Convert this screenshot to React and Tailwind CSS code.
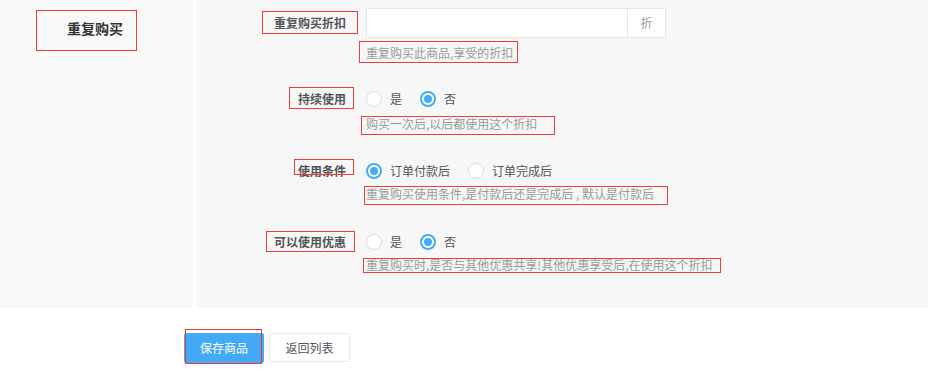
// App.jsx
const font = { fontFamily: '"Noto Sans CJK SC", "Noto Sans", sans-serif' };

function Radio({ checked }) {
  if (checked) {
    return (
      <span className="w-4 h-4 rounded-full border-2 border-[#44abf7] bg-white flex items-center justify-center">
        <span className="w-2 h-2 rounded-full bg-[#44abf7]" />
      </span>
    );
  }
  return <span className="w-4 h-4 rounded-full border border-[#dcdcdc] bg-white" />;
}

function Options({ items }) {
  return (
    <div className="flex items-center h-5">
      {items.map((it) => (
        <label key={it.text} className="flex items-center mr-[18px]">
          <Radio checked={it.checked} />
          <span className="ml-2 text-[12px] text-[#555]">{it.text}</span>
        </label>
      ))}
    </div>
  );
}

function Label({ children, box }) {
  return (
    <>
      <div className="w-[150px] shrink-0 text-right text-[12px] font-bold text-[#555]">{children}</div>
      <span className={"absolute border border-[#f23c3c] pointer-events-none " + box} />
    </>
  );
}

function Help({ children, className, box }) {
  return (
    <div className={"relative ml-[170px] h-[17px] leading-[17px] text-[12px] text-[#999] " + className}>
      {children}
      <span className={"absolute border border-[#f23c3c] pointer-events-none " + box} />
    </div>
  );
}

export default function App() {
  return (
    <div className="w-[928px] h-[375px] bg-white overflow-hidden" style={font}>
      <div className="flex h-[308px]">
        {/* left title */}
        <div className="relative w-[193px] shrink-0 bg-[#f8f8f8]">
          <div className="pl-[67px] pt-[19px] text-[14px] font-bold text-[#333] leading-[18px]">重复购买</div>
          <span className="absolute left-[36px] top-[10px] w-[101px] h-[41px] border border-[#f23c3c]" />
        </div>

        {/* right form */}
        <div className="ml-[3px] flex-1 bg-[#f7f7f7] pt-2">
          <div className="relative flex items-center h-[30px]">
            <Label box="left-[66px] top-[3px] w-[96px] h-[23px]">重复购买折扣</Label>
            <div className="ml-5 flex h-[30px] w-[300px] border border-[#e7e7e7] bg-white">
              <input className="flex-1 min-w-0 outline-none px-2 text-[12px]" />
              <span className="w-[38px] border-l border-[#e7e7e7] flex items-center justify-center text-[12px] text-[#999]">折</span>
            </div>
          </div>
          <Help className="mt-[6px]" box="-left-[7px] -top-[3px] w-[159px] h-[22px]">重复购买此商品,享受的折扣</Help>

          <div className="relative flex items-center h-5 mt-[28px]">
            <Label box="left-[93px] -top-[2px] w-[65px] h-[22px]">持续使用</Label>
            <div className="ml-5">
              <Options items={[{ text: "是" }, { text: "否", checked: true }]} />
            </div>
          </div>
          <Help className="mt-[6px]" box="-left-[5px] top-[1px] w-[194px] h-[19px]">购买一次后,以后都使用这个折扣</Help>

          <div className="relative flex items-center h-5 mt-[29px]">
            <Label box="left-[98px] -top-[2px] w-[60px] h-[16px]">使用条件</Label>
            <div className="ml-5">
              <Options items={[{ text: "订单付款后", checked: true }, { text: "订单完成后" }]} />
            </div>
          </div>
          <Help className="mt-[4px]" box="-left-[2px] top-[1px] w-[304px] h-[19px]">重复购买使用条件,是付款后还是完成后 , 默认是付款后</Help>

          <div className="relative flex items-center h-5 mt-[30px]">
            <Label box="left-[70px] -top-[1px] w-[89px] h-[21px]">可以使用优惠</Label>
            <div className="ml-5">
              <Options items={[{ text: "是" }, { text: "否", checked: true }]} />
            </div>
          </div>
          <Help className="mt-[4px]" box="-left-[3px] top-[2px] w-[358px] h-[15px]">重复购买时,是否与其他优惠共享!其他优惠享受后,在使用这个折扣</Help>
        </div>
      </div>

      {/* buttons */}
      <div className="flex pl-[184px] pt-[25px] gap-[5px]">
        <button className="relative w-[80px] h-[30px] rounded-[2px] bg-[#45aaf6] text-white text-[12px]">
          保存商品
          <span className="absolute left-[1px] -top-[4px] w-[77px] h-[35px] border border-[#e83a3a]" />
        </button>
        <button className="w-[81px] h-[29px] rounded-[2px] border border-[#eaeaea] bg-white text-[#555] text-[12px]">
          返回列表
        </button>
      </div>
    </div>
  );
}
